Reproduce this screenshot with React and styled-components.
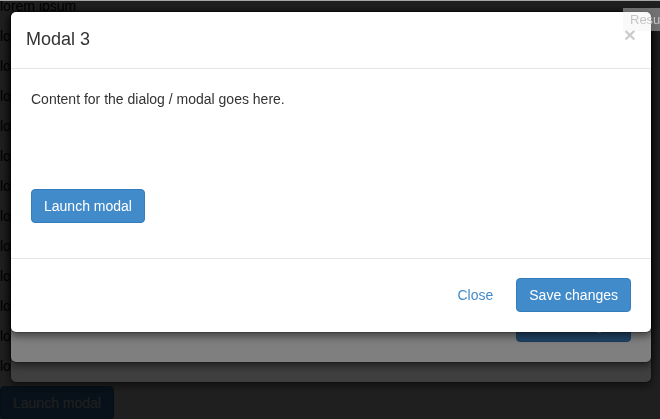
import React from "react";
import styled, { createGlobalStyle } from "styled-components";

const Global = createGlobalStyle`
  html, body { margin: 0; padding: 0; overflow: hidden; background: #fff; }
  body {
    font-family: "Liberation Sans", Arial, Helvetica, sans-serif;
    font-size: 14px;
    line-height: 20px;
    color: #333;
  }
  * { box-sizing: border-box; }
`;

const Page = styled.div`
  margin-top: -4px;
  display: flex;
  flex-direction: column;
  align-items: flex-start;
`;

const Line = styled.p`
  margin: 0 0 10px;
  color: #000;
`;

const Btn = styled.button`
  display: inline-block;
  font-family: inherit;
  font-size: 14px;
  line-height: 20px;
  padding: 6px 12px;
  border-radius: 4px;
  border: 1px solid ${(p) => (p.$variant === "link" ? "transparent" : "#357ebd")};
  background: ${(p) => (p.$variant === "link" ? "transparent" : "#428bca")};
  color: ${(p) => (p.$variant === "link" ? "#428bca" : "#fff")};
  cursor: pointer;
  white-space: nowrap;
`;

const Backdrop = styled.div`
  position: fixed;
  inset: 0;
  background: rgba(0, 0, 0, 0.5);
`;

const Dialog = styled.div`
  position: fixed;
  top: 11px;
  left: 10px;
  width: 642px;
  background: #fff;
  border: 1px solid rgba(0, 0, 0, 0.2);
  border-radius: 6px;
  box-shadow: 0 3px 9px rgba(0, 0, 0, 0.5);
  background-clip: padding-box;
`;

const Header = styled.div`
  display: flex;
  justify-content: space-between;
  align-items: flex-start;
  padding: 15px;
  border-bottom: 1px solid #e5e5e5;
`;

const Title = styled.h4`
  margin: 0;
  font-size: 18px;
  font-weight: 500;
  line-height: 1.428571;
  color: #333;
`;

const Close = styled.button`
  padding: 0;
  margin-top: -3px;
  border: 0;
  background: transparent;
  font-family: inherit;
  font-size: 21px;
  font-weight: bold;
  line-height: 1;
  color: #000;
  text-shadow: 0 1px 0 #fff;
  opacity: 0.2;
`;

const Body = styled.div`
  padding: 20px;
  display: flex;
  flex-direction: column;
  align-items: flex-start;
  gap: ${(p) => p.$spacer}px;
`;

const Text = styled.p`
  margin: 0;
  color: #333;
`;

const Footer = styled.div`
  margin-top: 15px;
  padding: 19px 20px 20px;
  border-top: 1px solid #e5e5e5;
  display: flex;
  justify-content: flex-end;
  gap: 10px;
`;

const ResultTab = styled.div`
  position: fixed;
  top: 8px;
  left: 623px;
  width: 60px;
  height: 23px;
  padding: 3px 0 0 7px;
  background: rgba(240, 240, 240, 0.4);
  color: #c4c4c4;
  font-size: 13px;
  line-height: 18px;
`;

const TopRule = styled.div`
  position: fixed;
  top: 0;
  left: 0;
  right: 0;
  height: 1px;
  background: #a6a6a6;
`;

function Modal({ title, spacer }) {
  return (
    <Dialog>
      <Header>
        <Title>{title}</Title>
        <Close>×</Close>
      </Header>
      <Body $spacer={spacer}>
        <Text>Content for the dialog / modal goes here.</Text>
        <Btn>Launch modal</Btn>
      </Body>
      <Footer>
        <Btn $variant="link">Close</Btn>
        <Btn>Save changes</Btn>
      </Footer>
    </Dialog>
  );
}

export default function App() {
  const lines = Array.from({ length: 13 }, (_, i) => i);
  return (
    <>
      <Global />
      <Page>
        {lines.map((i) => (
          <Line key={i}>lorem ipsum</Line>
        ))}
        <Btn>Launch modal</Btn>
      </Page>
      <Backdrop />
      <Modal title="Modal 1" spacer={130} />
      <Backdrop />
      <Modal title="Modal 2" spacer={110} />
      <Backdrop />
      <Modal title="Modal 3" spacer={80} />
      <ResultTab>Result</ResultTab>
      <TopRule />
    </>
  );
}
